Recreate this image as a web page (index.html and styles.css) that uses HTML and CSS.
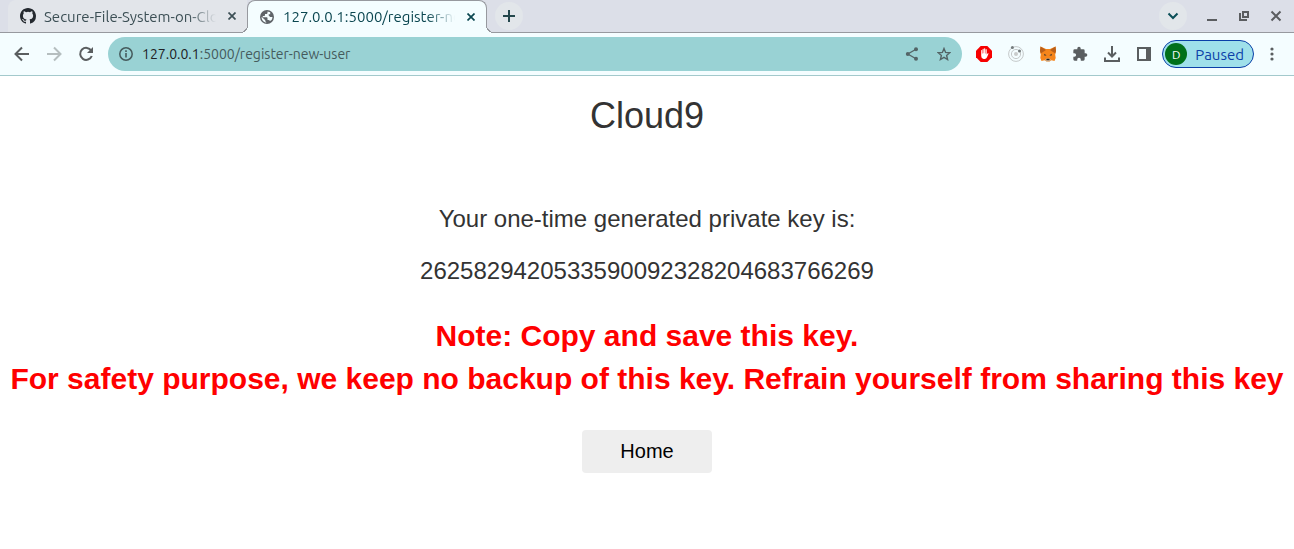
FILE: index.html
```
<!DOCTYPE html>
<html lang="en">
<head>
<meta charset="utf-8">
<title>Cloud9</title>
<link rel="stylesheet" href="styles.css">
</head>
<body>
<header class="browser">
  <div class="tabstrip">
    <div class="tab">
      <svg class="favicon" viewBox="0 0 16 16" fill="#24292f"><path d="M8 0C3.58 0 0 3.58 0 8c0 3.54 2.29 6.53 5.47 7.59.4.07.55-.17.55-.38 0-.19-.01-.82-.01-1.49-2.01.37-2.53-.49-2.69-.94-.09-.23-.48-.94-.82-1.13-.28-.15-.68-.52-.01-.53.63-.01 1.08.58 1.23.82.72 1.21 1.87.87 2.33.66.07-.52.28-.87.51-1.07-1.78-.2-3.64-.89-3.64-3.95 0-.87.31-1.59.82-2.15-.08-.2-.36-1.02.08-2.12 0 0 .67-.21 2.2.82a7.6 7.6 0 0 1 4 0c1.53-1.04 2.2-.82 2.2-.82.44 1.1.16 1.92.08 2.12.51.56.82 1.27.82 2.15 0 3.07-1.87 3.75-3.65 3.95.29.25.54.73.54 1.48 0 1.07-.01 1.93-.01 2.2 0 .21.15.46.55.38A8.01 8.01 0 0 0 16 8c0-4.42-3.58-8-8-8z"/></svg>
      <span class="tab-title">Secure-File-System-on-Clo</span>
      <button class="tab-close" aria-label="Close tab"><svg width="8" height="8" viewBox="0 0 8 8"><path d="M.5.5l7 7M7.500.5l-7 7" stroke="#3c4f55" stroke-width="1.700"/></svg></button>
    </div>
    <div class="tab tab-active">
      <svg class="favicon" viewBox="0 0 16 16"><circle cx="8" cy="8" r="7" fill="#5f6368"/><path d="M8.500 2.500v1.200c0 .8-.6 1.300-1.400 1.300H6v1.300c0 .5-.4.8-.9.8H3.800v1.200h3.700c.6 0 1 .4 1 1V11h1c.7 0 1.200.4 1.400 1l1.700-1.100c.5-.8.9-1.800.9-2.900H11.200l-1.500-1.500V5.200h1.500V3.300zM2.600 7.700l3.700 3.500v1.100l1.200 1.200C4.600 13.400 2.400 11 2.600 7.700z" fill="#f4fdff"/></svg>
      <span class="tab-title">127.0.0.1:5000/register-ne</span>
      <button class="tab-close" aria-label="Close tab"><svg width="8" height="8" viewBox="0 0 8 8"><path d="M.5.5l7 7M7.500.5l-7 7" stroke="#0b4650" stroke-width="1.700"/></svg></button>
    </div>
    <button class="round new-tab" aria-label="New tab"><svg width="12" height="12" viewBox="0 0 12 12"><path d="M6 0v12M0 6h12" stroke="#24474c" stroke-width="2"/></svg></button>
    <div class="window-controls">
      <button class="round" aria-label="Search tabs"><svg width="12" height="8" viewBox="0 0 12 8"><path d="M1.500 1.500L6 6l4.500-4.500" fill="none" stroke="#0b4f58" stroke-width="2"/></svg></button>
      <button class="win" aria-label="Minimize"><svg width="12" height="12" viewBox="0 0 12 12"><path d="M1 10h10" stroke="#5b5d60" stroke-width="2"/></svg></button>
      <button class="win" aria-label="Restore"><svg width="12" height="12" viewBox="0 0 12 12" fill="none" stroke="#5b5d60" stroke-width="2"><path d="M5 2h5v5H5zM2 3v7h7"/></svg></button>
      <button class="win" aria-label="Close window"><svg width="12" height="12" viewBox="0 0 12 12"><path d="M1.500 1.500l9 9M10.500 1.500l-9 9" stroke="#5b5d60" stroke-width="2"/></svg></button>
    </div>
  </div>
  <div class="toolbar">
    <nav class="nav">
      <button class="tool" aria-label="Back"><svg width="16" height="16" viewBox="0 0 16 16" fill="none" stroke="#5a5e60" stroke-width="2"><path d="M15 8H2M8 1.500L1.500 8 8 14.500"/></svg></button>
      <button class="tool" aria-label="Forward"><svg width="16" height="16" viewBox="0 0 16 16" fill="none" stroke="#b5bebf" stroke-width="2"><path d="M1 8h13M8 1.500L14.500 8 8 14.500"/></svg></button>
      <button class="tool" aria-label="Reload"><svg width="16" height="16" viewBox="0 0 16 16"><path d="M13.300 4.700A6 6 0 1 0 13.800 10" fill="none" stroke="#5a5e60" stroke-width="2"/><path d="M15 1v6H9z" fill="#5a5e60"/></svg></button>
    </nav>
    <div class="omnibox">
      <svg width="14" height="14" viewBox="0 0 14 14"><circle cx="7" cy="7" r="6.200" fill="none" stroke="#455a5c" stroke-width="1.500"/><path d="M7 6v4.500M7 3.300v1.600" stroke="#455a5c" stroke-width="1.600"/></svg>
      <span class="url"><span class="host">127.0.0.1</span>:5000/register-new-user</span>
      <button class="tool" aria-label="Share"><svg width="14" height="14" viewBox="0 0 14 14" fill="#536466"><path d="M11 2.300L2.800 7l8.200 4.700" fill="none" stroke="#536466" stroke-width="1.300"/><circle cx="11" cy="2.300" r="2"/><circle cx="2.800" cy="7" r="2"/><circle cx="11" cy="11.700" r="2"/></svg></button>
      <button class="tool" aria-label="Bookmark"><svg width="14" height="14" viewBox="0 0 14 14"><path d="M7 1.500l1.600 3.900 4.200.3-3.200 2.700 1 4.100L7 10.300l-3.600 2.200 1-4.100L1.200 5.700l4.200-.3z" fill="none" stroke="#536466" stroke-width="1.400"/></svg></button>
    </div>
    <div class="extensions">
      <button class="tool" aria-label="AdBlock"><svg width="16" height="16" viewBox="0 0 16 16"><path d="M4.700 0h6.600L16 4.700v6.600L11.300 16H4.700L0 11.300V4.700z" fill="#f70000"/><path d="M5.200 8.500V4.300q.5-.7 1 0v3.200h.4V3q.6-.7 1.100 0v4.300h.4V2.600q.6-.7 1.100 0v4.900h.4V3.400q.6-.6 1.100.1v5.200l.7-1.200q.7-.7 1.200 0l-1.600 3.700q-.7 1.700-2.300 1.700H7.600Q5.200 12.700 5.200 10z" fill="#fff"/></svg></button>
      <button class="tool" aria-label="Orbit"><svg width="16" height="16" viewBox="0 0 16 16" fill="none" stroke="#c5c9ca"><circle cx="8" cy="8" r="7.400"/><circle cx="8" cy="8" r="4.600"/><circle cx="8" cy="8" r="2" fill="#c9cccc" stroke="none"/><circle cx="4.400" cy="1.600" r="1.500" fill="#747b7c" stroke="none"/><circle cx="11.500" cy="5" r="1.500" fill="#747b7c" stroke="none"/></svg></button>
      <button class="tool" aria-label="MetaMask"><svg width="16" height="16" viewBox="0 0 16 16"><path d="M.5.5L6 3h4L15.500.5 16 5l-.8 3.500.5 3.500-1.200 3-3-.7L9.500 15.500h-3l-2-1.200-3 .7-1.200-3 .5-3.500L0 5z" fill="#f6851b"/><path d="M.5.5L6 4 3 6 .8 7.500 0 5zM15.500.5L10 4l3 2 2.200 1.500L16 5z" fill="#b95f1a"/><path d="M4 7.800l2.600 1.400-2 .6zM12 7.800L9.400 9.200l2 .6z" fill="#333"/><path d="M5 14l1.400-1.500h3.200L11 14l-1.500 1.500h-3z" fill="#d9b99a"/><path d="M6.600 12.800h2.800l.3 1.400H6.300z" fill="#222"/></svg></button>
      <button class="tool" aria-label="Extensions"><svg width="16" height="16" viewBox="0 0 24 24" fill="#5a5e60"><path d="M20.500 11H19V7a2 2 0 0 0-2-2h-4V3.500a2.500 2.500 0 0 0-5 0V5H4a2 2 0 0 0-2 2v3.800h1.500a2.700 2.700 0 0 1 0 5.400H2V20a2 2 0 0 0 2 2h3.800v-1.500a2.700 2.700 0 0 1 5.400 0V22H17a2 2 0 0 0 2-2v-4h1.500a2.500 2.500 0 0 0 0-5z"/></svg></button>
      <button class="tool" aria-label="Downloads"><svg width="16" height="16" viewBox="0 0 16 16" fill="none" stroke="#5a5e60" stroke-width="2"><path d="M8 0v10M4 6.500l4 4 4-4M1 11.500V15h14v-3.500"/></svg></button>
      <button class="tool" aria-label="Side panel"><svg width="14" height="14" viewBox="0 0 14 14"><path d="M1 1h12v12H1z" fill="none" stroke="#5a5e60" stroke-width="2"/><path d="M9 0h5v14H9z" fill="#5a5e60"/></svg></button>
    </div>
    <button class="profile"><span class="avatar">D</span>Paused</button>
    <button class="tool menu" aria-label="Menu"><svg width="4" height="14" viewBox="0 0 4 14" fill="#5a5e60"><circle cx="2" cy="2" r="1.600"/><circle cx="2" cy="7" r="1.600"/><circle cx="2" cy="12" r="1.600"/></svg></button>
  </div>
</header>
<main class="page">
  <h1 class="brand">Cloud9</h1>
  <p class="message">Your one-time generated private key is:</p>
  <p class="message">2625829420533590092328204683766269</p>
  <p class="note">Note: Copy and save this key.<br>For safety purpose, we keep no backup of this key. Refrain yourself from sharing this key</p>
  <button class="home">Home</button>
</main>
</body>
</html>
```
FILE: styles.css
```
* { box-sizing: border-box; }
body {
  margin: 0;
  background: #fff;
  color: #333;
  font-family: "Liberation Sans", Arial, sans-serif;
}
button {
  margin: 0;
  padding: 0;
  border: 0;
  background: none;
  font: inherit;
  color: inherit;
}
svg { display: block; flex: none; }

.browser { font-family: Ubuntu, "Noto Sans", "Open Sans", sans-serif; font-size: 15px; }
.tabstrip {
  display: flex;
  height: 33px;
  padding-left: 8px;
  background: #dcdfe8;
  border-bottom: 1px solid #97999f;
}
.tab {
  display: flex;
  align-items: center;
  width: 239px;
  height: 32px;
  padding: 0 7px 0 12px;
  border-radius: 8px 0 0 0;
  background: #e2e5ea;
  color: #3c4f55;
}
.favicon { width: 16px; height: 16px; margin-right: 8px; }
.tab-title {
  flex: 1;
  overflow: hidden;
  white-space: nowrap;
  mask-image: linear-gradient(to right, #000 84%, transparent);
}
.tab-close {
  display: flex;
  align-items: center;
  justify-content: center;
  width: 16px;
  height: 16px;
  margin-left: 8px;
}
.tab-active {
  position: relative;
  width: 240px;
  height: 33px;
  padding: 0 7px 1px 11px;
  border: 1px solid #97999f;
  border-bottom: 0;
  border-radius: 8px 8px 0 0;
  background: #f4fdff;
  color: #0b4650;
}
.tab-active::before,
.tab-active::after {
  content: "";
  position: absolute;
  bottom: 0;
  width: 8px;
  height: 8px;
}
.tab-active::before {
  left: -8px;
  background: radial-gradient(circle at 0 0, #e2e5ea 7px, #97999f 7px, #97999f 8px, #f4fdff 8px);
}
.tab-active::after {
  right: -8px;
  background: radial-gradient(circle at 100% 0, #dcdfe8 7px, #97999f 7px, #97999f 8px, #f4fdff 8px);
}
.round {
  display: flex;
  align-items: center;
  justify-content: center;
  width: 28px;
  height: 28px;
  margin-top: 2px;
  border-radius: 50%;
  background: #e2e6ea;
}
.new-tab { margin-left: 8px; }
.window-controls { display: flex; margin-left: auto; padding-right: 2px; }
.win {
  display: flex;
  align-items: center;
  justify-content: center;
  width: 32px;
  height: 32px;
}
.window-controls .round { margin-right: 9px; }

.toolbar {
  display: flex;
  align-items: center;
  height: 43px;
  padding: 0 8px 0 6px;
  background: #f4fdff;
  border-bottom: 1px solid #a3c9cc;
}
.tool {
  display: flex;
  align-items: center;
  justify-content: center;
  width: 32px;
  height: 28px;
}
.nav, .extensions { display: flex; }
.omnibox {
  display: flex;
  align-items: center;
  flex: 1;
  height: 34px;
  margin: 0 6px;
  padding: 0 2px 0 11px;
  border-radius: 17px;
  background: #99d2d4;
  color: #455a5c;
}
.url { flex: 1; margin-left: 9px; font-size: 14px; }
.host { color: #202124; }
.profile {
  display: flex;
  align-items: center;
  gap: 8px;
  height: 28px;
  margin-left: 2px;
  padding: 0 9px 0 2px;
  border: 1px solid #0b40a8;
  border-radius: 14px;
  background: #9fe0ea;
  color: #0b40a8;
}
.avatar {
  display: flex;
  align-items: center;
  justify-content: center;
  width: 22px;
  height: 22px;
  border-radius: 50%;
  background: #00701a;
  color: #fff;
  font-size: 12px;
}
.menu { width: 28px; margin-left: 4px; }

.page { padding-top: 20px; text-align: center; }
.brand {
  margin: 0 0 66px;
  font-size: 36px;
  font-weight: 400;
  line-height: 40px;
}
.message { margin: 0 0 18px; font-size: 24px; line-height: 34px; }
.note {
  margin: 26px 0 30px;
  color: #f00;
  font-size: 30px;
  font-weight: 700;
  line-height: 43px;
}
.home {
  width: 130px;
  height: 43px;
  border-radius: 4px;
  background: #eee;
  color: #000;
  font-size: 20px;
}
```
